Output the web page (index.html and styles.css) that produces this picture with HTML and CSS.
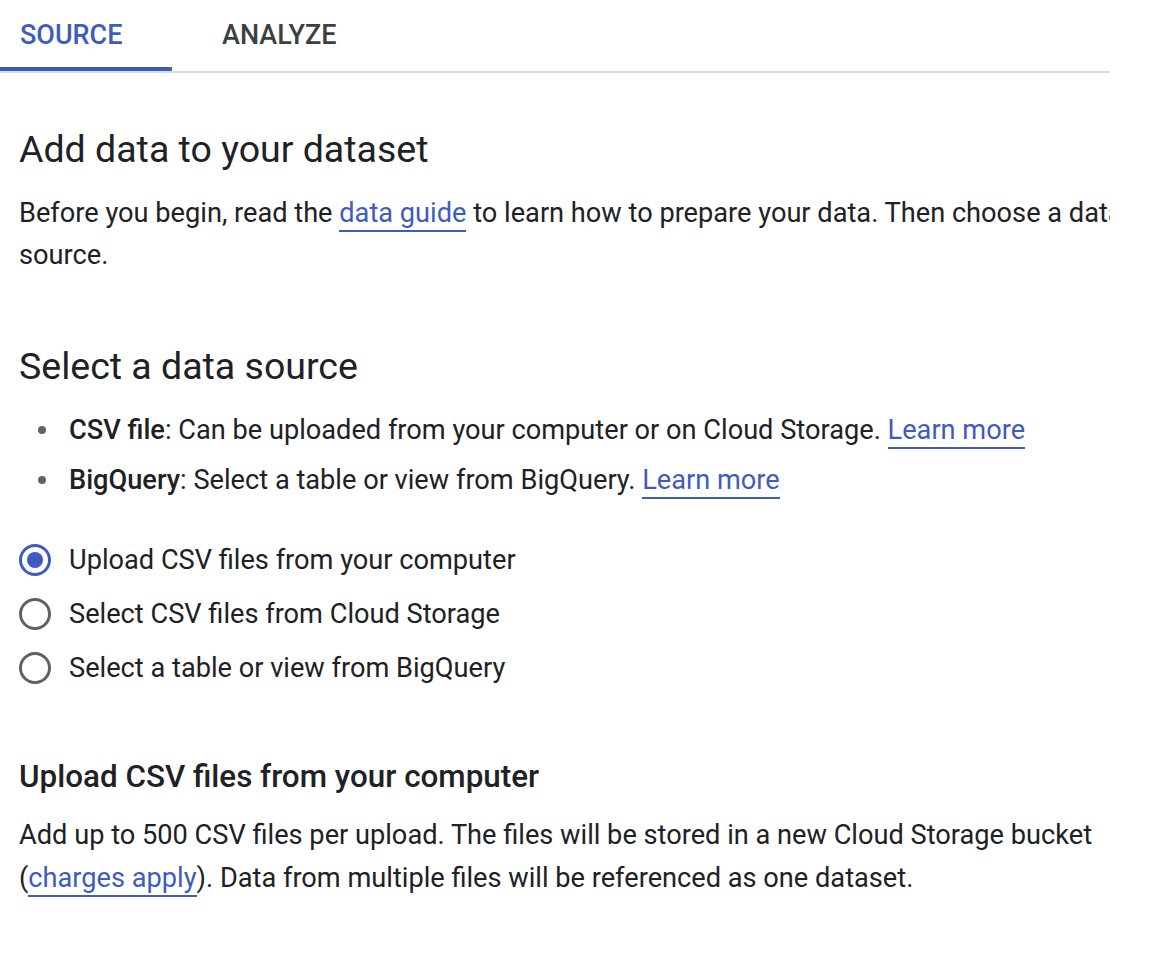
FILE: index.html
```html
<!DOCTYPE html>
<html lang="en">
<head>
<meta charset="utf-8">
<title>Add data to your dataset</title>
<link rel="stylesheet" href="styles.css">
</head>
<body>
<div class="page">
  <nav class="tabs">
    <div class="tab tab-active">SOURCE</div>
    <div class="tab tab-second">ANALYZE</div>
  </nav>
  <main class="content">
    <h1 class="title">Add data to your dataset</h1>
    <p class="text">Before you begin, read the <a class="link" href="#">data guide</a> to learn how to prepare your data. Then choose a data source.</p>

    <h2 class="title title-second">Select a data source</h2>
    <ul class="bullets">
      <li class="bullet"><b class="strong">CSV file</b>: Can be uploaded from your computer or on Cloud Storage. <a class="link" href="#">Learn more</a></li>
      <li class="bullet"><b class="strong">BigQuery</b>: Select a table or view from BigQuery. <a class="link" href="#">Learn more</a></li>
    </ul>

    <div class="radios">
      <label class="radio"><span class="radio-circle radio-checked"></span><span class="radio-label">Upload CSV files from your computer</span></label>
      <label class="radio"><span class="radio-circle"></span><span class="radio-label">Select CSV files from Cloud Storage</span></label>
      <label class="radio"><span class="radio-circle"></span><span class="radio-label">Select a table or view from BigQuery</span></label>
    </div>

    <h3 class="subtitle">Upload CSV files from your computer</h3>
    <p class="text text-last">Add up to 500 CSV files per upload. The files will be stored in a new Cloud Storage bucket (<a class="link" href="#">charges apply</a>). Data from multiple files will be referenced as one dataset.</p>
  </main>
</div>
</body>
</html>
```

FILE: styles.css
```css
html, body {
  margin: 0;
  padding: 0;
  background: #ffffff;
}

body {
  font-family: Roboto, "Liberation Sans", Arial, sans-serif;
  color: #202124;
  -webkit-font-smoothing: antialiased;
}

.page {
  width: 1110px;
  overflow: hidden;
}

.tabs {
  display: flex;
  height: 71px;
  border-bottom: 2px solid #dadce0;
}

.tab {
  box-sizing: border-box;
  height: 71px;
  padding-top: 18px;
  font-size: 27px;
  font-weight: 500;
  line-height: 34px;
  color: #3c4043;
}

.tab-active {
  width: 172px;
  padding-left: 20px;
  color: #3f5bbf;
  border-bottom: 4px solid #3f5bbf;
}

.tab-second {
  padding-left: 50px;
}

.content {
  padding: 0 0 0 19px;
  width: 1180px;
}

.title {
  margin: 0;
  font-size: 37.5px;
  font-weight: 400;
  line-height: 44px;
  padding-top: 54px;
}

.title-second {
  padding-top: 68px;
}

.text {
  margin: 0;
  padding-top: 22px;
  font-size: 27.2px;
  line-height: 41.5px;
  width: 1125px;
}

.text-last {
  padding-top: 19px;
  line-height: 43px;
}

.link {
  color: #3f5bbf;
  text-decoration: none;
  border-bottom: 2px solid #3f5bbf;
  padding-bottom: 1px;
}

.bullets {
  margin: 0;
  padding: 17px 0 0 50px;
  list-style: none;
}

.bullet {
  position: relative;
  font-size: 27.2px;
  line-height: 50px;
}

.bullet::before {
  content: "";
  position: absolute;
  left: -31px;
  top: 21px;
  width: 8px;
  height: 8px;
  border-radius: 50%;
  background: #5f6368;
}

.strong {
  font-weight: 500;
}

.radios {
  display: flex;
  flex-direction: column;
  padding-top: 28px;
}

.radio {
  display: flex;
  align-items: center;
  height: 54px;
  font-size: 27.2px;
}

.radio-circle {
  box-sizing: border-box;
  flex: none;
  width: 32px;
  height: 32px;
  border-radius: 50%;
  border: 3.5px solid #616161;
  display: flex;
  align-items: center;
  justify-content: center;
}

.radio-checked {
  border-color: #3f5bbf;
}

.radio-checked::after {
  content: "";
  width: 16px;
  height: 16px;
  border-radius: 50%;
  background: #3f5bbf;
}

.radio-label {
  margin-left: 18px;
}

.subtitle {
  margin: 0;
  padding-top: 64px;
  font-size: 31.4px;
  font-weight: 500;
  line-height: 36px;
}
```
